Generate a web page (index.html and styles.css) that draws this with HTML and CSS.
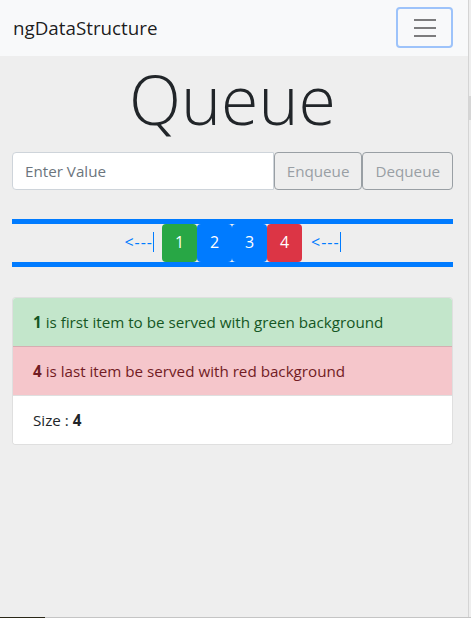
FILE: index.html
```html
<!DOCTYPE html>
<html lang="en">
<head>
<meta charset="utf-8">
<title>ngDataStructure</title>
<link rel="stylesheet" href="styles.css">
</head>
<body>
<div class="page">
  <nav class="navbar">
    <span class="brand">ngDataStructure</span>
    <button class="toggler" type="button" aria-label="Toggle navigation">
      <svg width="30" height="30" viewBox="0 0 30 30" aria-hidden="true">
        <path d="M4 7h22M4 15h22M4 23h22" stroke="rgba(0,0,0,0.5)" stroke-width="2" stroke-linecap="butt" fill="none"/>
      </svg>
    </button>
  </nav>
  <main class="container">
    <h1 class="title">Queue</h1>
    <div class="input-group">
      <input class="form-control" type="text" placeholder="Enter Value">
      <button class="btn btn-outline" type="button" disabled>Enqueue</button>
      <button class="btn btn-outline" type="button" disabled>Dequeue</button>
    </div>
    <div class="queue">
      <span class="arrow">&lt;---<span class="arrow-bar"></span></span>
      <div class="items">
        <span class="item item-first">1</span>
        <span class="item item-mid">2</span>
        <span class="item item-mid">3</span>
        <span class="item item-last">4</span>
      </div>
      <span class="arrow arrow-right">&lt;---<span class="arrow-bar"></span></span>
    </div>
    <ul class="list">
      <li class="list-item list-success"><b>1</b> is first item to be served with green background</li>
      <li class="list-item list-danger"><b>4</b> is last item be served with red background</li>
      <li class="list-item">Size : <b>4</b></li>
    </ul>
  </main>
</div>
<div class="scroll-thumb"></div>
<div class="bottom-edge"><span class="bottom-dark"></span></div>
</body>
</html>
```
FILE: styles.css
```css
* { box-sizing: border-box; }
html, body { margin: 0; padding: 0; }
body {
  background: #eeeeee;
  font-family: "Open Sans", "Lato", sans-serif;
  font-size: 15.2px;
  line-height: 24px;
  color: #212529;
  height: 618px;
  overflow: hidden;
}
.page {
  width: 469px;
  min-height: 618px;
  border-right: 1px solid #d4d4d4;
}
.navbar {
  height: 56px;
  background: #f8f9fa;
  display: flex;
  align-items: center;
  justify-content: space-between;
  padding: 0 15px 0 13px;
}
.brand {
  font-size: 18.8px;
  line-height: 30px;
  color: rgba(0,0,0,0.9);
}
.toggler {
  width: 57px;
  height: 41px;
  margin-top: -1px;
  padding: 0;
  background: transparent;
  border: 2px solid #9dc3fa;
  border-radius: 4px;
  display: flex;
  align-items: center;
  justify-content: center;
}
.toggler svg { display: block; }
.container {
  padding: 0 15px 0 12px;
}
.title {
  margin: 0 0 10px;
  text-align: center;
  font-size: 68px;
  font-weight: 300;
  line-height: 86px;
}
.input-group {
  display: flex;
  height: 38px;
}
.form-control {
  flex: 1 1 auto;
  min-width: 0;
  height: 38px;
  padding: 6px 12px;
  font: inherit;
  color: #495057;
  background: #fff;
  border: 1px solid #ced4da;
  border-radius: 4px 0 0 4px;
  outline: none;
}
.form-control::placeholder { color: #6c757d; opacity: 1; }
.btn {
  font: inherit;
  height: 38px;
  padding: 6px 12px;
  border-radius: 4px;
  background: transparent;
}
.btn-outline {
  color: #6c757d;
  border: 1px solid #6c757d;
  opacity: 0.65;
}
.queue {
  margin-top: 29px;
  border-top: 5px solid #007bff;
  border-bottom: 5px solid #007bff;
  height: 48px;
  display: flex;
  justify-content: center;
  align-items: center;
}
.arrow {
  color: #007bff;
  display: flex;
  align-items: center;
  font-size: 16px;
  letter-spacing: 1px;
  margin-right: 8px;
  margin-top: -2px;
}
.arrow-right { margin-left: 9px; margin-right: 0; }
.arrow-bar {
  display: inline-block;
  width: 1px;
  height: 20px;
  background: #007bff;
  margin-left: 0;
}
.items { display: flex; }
.item {
  display: block;
  width: 35px;
  height: 38px;
  line-height: 24px;
  padding: 6px 0;
  text-align: center;
  color: #fff;
  font-size: 16px;
  border-radius: 4px;
}
.item-first { background: #28a745; }
.item-mid { background: #007bff; }
.item-last { background: #dc3545; }
.list {
  list-style: none;
  margin: 30px 0 0;
  padding: 0;
  border-radius: 4px;
  overflow: hidden;
  border: 1px solid rgba(0,0,0,0.125);
  background: #fff;
}
.list-item {
  padding: 12px 20px;
  line-height: 24px;
  border-top: 1px solid rgba(0,0,0,0.125);
  background: #fff;
}
.list-item:first-child { border-top: 0; }
.list-success { background: #c3e6cb; color: #155724; }
.list-danger { background: #f5c6cb; color: #721c24; }
.scroll-thumb {
  position: fixed;
  top: 96px;
  left: 469px;
  width: 2px;
  height: 24px;
  background: #d6d6d6;
}
.bottom-edge {
  position: fixed;
  left: 0;
  right: 0;
  bottom: 0;
  height: 1px;
  background: #c4c4c4;
}
.bottom-dark {
  display: block;
  width: 45px;
  height: 1px;
  background: #2a2718;
}
```
